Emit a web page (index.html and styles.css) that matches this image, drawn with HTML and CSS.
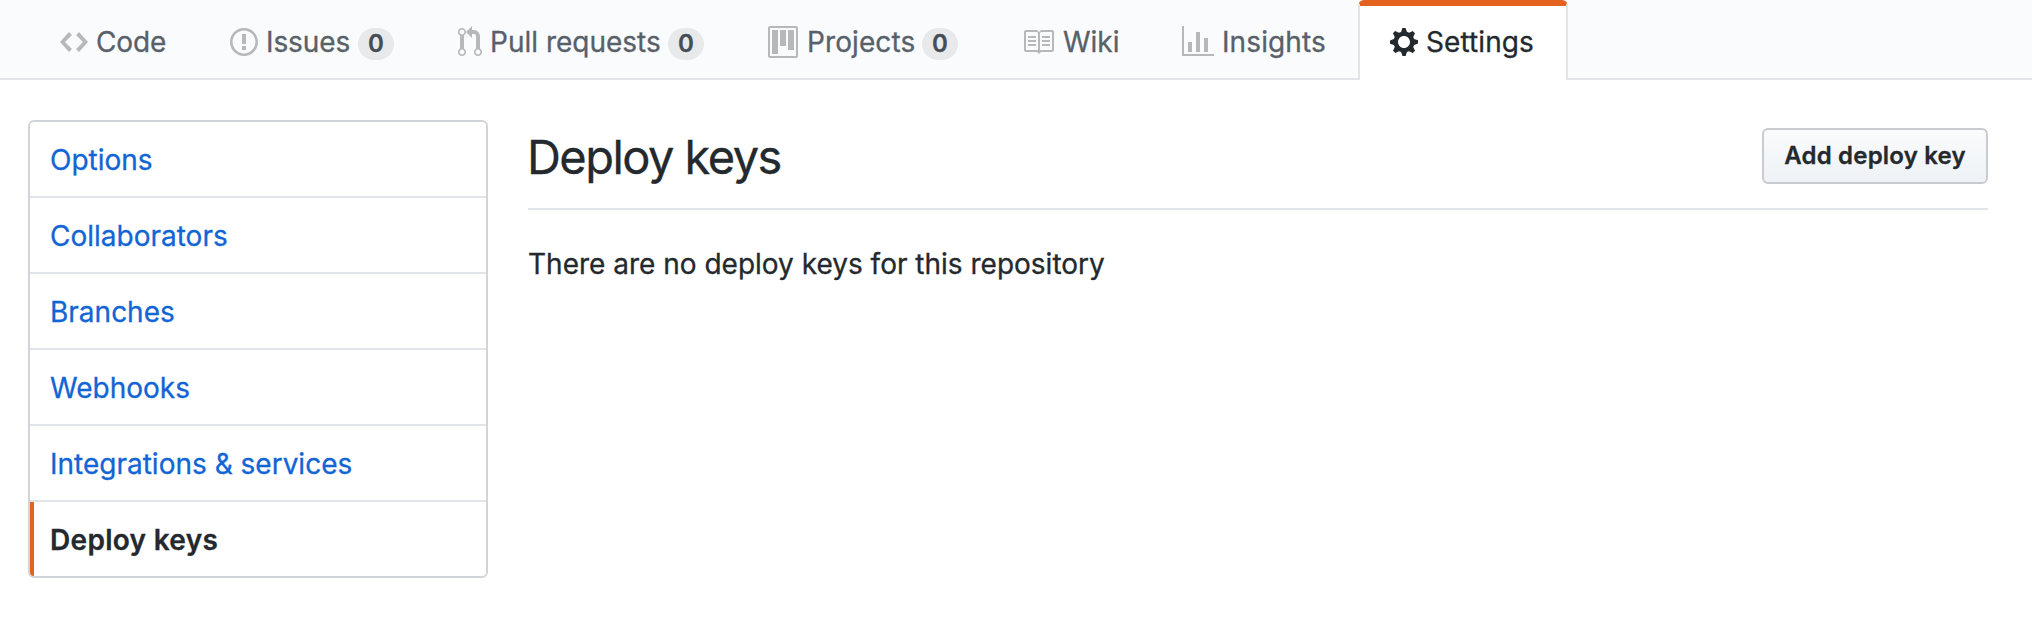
FILE: index.html
```html
<!DOCTYPE html>
<html lang="en">
<head>
<meta charset="utf-8">
<title>Deploy keys</title>
<link rel="stylesheet" href="styles.css">
</head>
<body>
<nav class="reponav">
  <a class="tab tab-code"><svg class="icon" width="28" height="32" viewBox="0 0 14 16"><path d="M9.5 3L8 4.5 11.5 8 8 11.5 9.5 13 14 8 9.5 3zm-5 0L0 8l4.5 5L6 11.5 2.5 8 6 4.5 4.5 3z"/></svg><span class="label">Code</span></a>
  <a class="tab tab-issues"><svg class="icon" width="28" height="32" viewBox="0 0 14 16"><path fill-rule="evenodd" d="M7 2.3c3.14 0 5.7 2.56 5.7 5.7s-2.56 5.7-5.7 5.7A5.71 5.71 0 0 1 1.3 8c0-3.14 2.56-5.7 5.7-5.7zM7 1C3.14 1 0 4.14 0 8s3.14 7 7 7 7-3.14 7-7-3.14-7-7-7zm1 3H6v5h2V4zm0 6H6v2h2v-2z"/></svg><span class="label">Issues</span><span class="counter">0</span></a>
  <a class="tab tab-pulls"><svg class="icon" width="24" height="32" viewBox="0 0 12 16"><path fill-rule="evenodd" d="M11 11.28V5c-.03-.78-.34-1.47-.94-2.06C9.46 2.35 8.78 2.03 8 2H7V0L4 3l3 3V4h1c.27.02.48.11.69.31.21.2.3.42.31.69v6.28A1.993 1.993 0 0 0 10 15a1.993 1.993 0 0 0 1-3.72zm-1 2.92c-.66 0-1.2-.55-1.2-1.2 0-.65.55-1.2 1.2-1.2.65 0 1.2.55 1.2 1.2 0 .65-.55 1.2-1.2 1.2zM4 3c0-1.11-.89-2-2-2a1.993 1.993 0 0 0-1 3.72v6.56A1.993 1.993 0 0 0 2 15a1.993 1.993 0 0 0 1-3.72V4.72c.59-.34 1-.98 1-1.72zm-.8 10c0 .66-.55 1.2-1.2 1.2-.65 0-1.2-.55-1.2-1.2 0-.65.55-1.2 1.2-1.2.65 0 1.2.55 1.2 1.2zM2 4.2C1.34 4.2.8 3.65.8 3c0-.65.55-1.2 1.2-1.2.65 0 1.2.55 1.2 1.2 0 .65-.55 1.2-1.2 1.2z"/></svg><span class="label">Pull requests</span><span class="counter">0</span></a>
  <a class="tab tab-projects"><svg class="icon" width="30" height="32" viewBox="0 0 15 16"><path fill-rule="evenodd" d="M10 12h3V2h-3v10zm-4-2h3V2H6v8zm-4 4h3V2H2v12zm-1 1h13V1H1v14zM14 0H1a1 1 0 0 0-1 1v14a1 1 0 0 0 1 1h13a1 1 0 0 0 1-1V1a1 1 0 0 0-1-1z"/></svg><span class="label">Projects</span><span class="counter">0</span></a>
  <a class="tab tab-wiki"><svg class="icon" width="32" height="32" viewBox="0 0 16 16"><path fill-rule="evenodd" d="M3 5h4v1H3V5zm0 3h4V7H3v1zm0 2h4V9H3v1zm11-5h-4v1h4V5zm0 2h-4v1h4V7zm0 2h-4v1h4V9zm2-6v9c0 .55-.45 1-1 1H9.5l-1 1-1-1H2c-.55 0-1-.45-1-1V3c0-.55.45-1 1-1h5.5l1 1 1-1H15c.55 0 1 .45 1 1zm-8 .5L7.5 3H2v9h6V3.5zm7-.5H9.5l-.5.5V12h6V3z"/></svg><span class="label">Wiki</span></a>
  <a class="tab tab-insights"><svg class="icon" width="32" height="32" viewBox="0 0 16 16"><path d="M16 14v1H0V0h1v14h15zM5 13H3V8h2v5zm4 0H7V3h2v10zm4 0h-2V6h2v7z"/></svg><span class="label">Insights</span></a>
  <a class="tab tab-settings selected"><svg class="icon" width="28" height="32" viewBox="0 0 14 16"><path fill-rule="evenodd" d="M14 8.77v-1.6l-1.94-.64-.45-1.09.88-1.84-1.13-1.13-1.81.91-1.09-.45-.69-1.92h-1.6l-.63 1.94-1.11.45-1.84-.88-1.13 1.13.91 1.81-.45 1.09L0 7.23v1.59l1.94.64.45 1.09-.88 1.84 1.13 1.13 1.81-.91 1.09.45.69 1.92h1.59l.63-1.94 1.11-.45 1.84.88 1.13-1.13-.92-1.81.47-1.09L14 8.75v.02zM7 11c-1.66 0-3-1.34-3-3s1.34-3 3-3 3 1.34 3 3-1.34 3-3 3z"/></svg><span class="label">Settings</span></a>
</nav>
<div class="container">
  <nav class="menu">
    <a class="menu-item">Options</a>
    <a class="menu-item">Collaborators</a>
    <a class="menu-item">Branches</a>
    <a class="menu-item">Webhooks</a>
    <a class="menu-item">Integrations &amp; services</a>
    <a class="menu-item current">Deploy keys</a>
  </nav>
  <main class="content">
    <header class="subhead">
      <h1 class="title">Deploy keys</h1>
      <button class="btn" type="button">Add deploy key</button>
    </header>
    <p class="blank">There are no deploy keys for this repository</p>
  </main>
</div>
</body>
</html>
```
FILE: styles.css
```css
* { box-sizing: border-box; }
body {
  margin: 0;
  background: #fff;
  color: #24292e;
  font: 400 28px/42px Inter, "Liberation Sans", sans-serif;
  -webkit-text-stroke: 0.3px;
  white-space: nowrap;
}
.reponav {
  display: flex;
  height: 80px;
  padding-left: 28px;
  background: #fafbfc;
  border-bottom: 2px solid #e1e4e8;
}
.tab {
  display: flex;
  height: 80px;
  padding: 20px 30px 0;
  border: solid transparent;
  border-width: 6px 2px 0;
  color: #586069;
}
.tab-code { width: 170px; }
.tab-issues { width: 228px; }
.tab-pulls { width: 310px; }
.tab-projects { width: 254px; letter-spacing: 0.1px; }
.tab-wiki { width: 160px; }
.tab-insights { width: 208px; letter-spacing: 0.1px; }
.tab-settings { width: 210px; letter-spacing: 0.1px; }
.icon { flex: none; fill: #b6b8ba; }
.label { height: 42px; margin: -5px 0 0 8px; }
.tab-code .label, .tab-issues .label { letter-spacing: -0.1px; }
.tab-projects .label, .tab-wiki .label { margin-left: 9px; }
.counter {
  height: 32px;
  width: 36px;
  margin: 2px 0 0 auto;
  flex: none;
  border-radius: 16px;
  background: #e8e9eb;
  color: #444d56;
  font-size: 24px;
  font-weight: 600;
  letter-spacing: 0;
  line-height: 31px;
  text-align: center;
}
.selected {
  background: #fff;
  color: #24292e;
  border-color: #e36220 #e1e4e8 transparent;
  border-radius: 6px 6px 0 0;
}
.selected .icon { fill: #24292e; }
.container {
  display: flex;
  gap: 40px;
  padding: 40px 44px 0 28px;
}
.menu {
  width: 460px;
  border: 2px solid #d1d5da;
  border-radius: 6px;
  overflow: hidden;
}
.menu-item {
  display: block;
  height: 76px;
  padding: 17px 20px 15px;
  border-bottom: 2px solid #e1e4e8;
  color: #1265d4;
}
.menu-item:last-child {
  height: 74px;
  border-bottom: 0;
}
.current {
  padding-left: 16px;
  border-left: 4px solid #e36220;
  color: #24292e;
  font-weight: 600;
  letter-spacing: 0.3px;
}
.content { flex: 1; }
.subhead {
  display: flex;
  justify-content: space-between;
  height: 90px;
  border-bottom: 2px solid #e1e4e8;
}
.title {
  margin: 0 0 0 -1px;
  font-size: 47px;
  font-weight: 400;
  letter-spacing: -1.55px;
  line-height: 74px;
}
.btn {
  width: 226px;
  height: 56px;
  margin: 8px 0 0;
  padding: 0;
  border: 2px solid #c8cbcf;
  border-radius: 6px;
  background: linear-gradient(#fafbfc, #eff3f6 90%);
  color: #24292e;
  font: 600 24px/50px Inter, "Liberation Sans", sans-serif;
  letter-spacing: 0.2px;
}
.blank { margin: 33px 0 0; }
```
